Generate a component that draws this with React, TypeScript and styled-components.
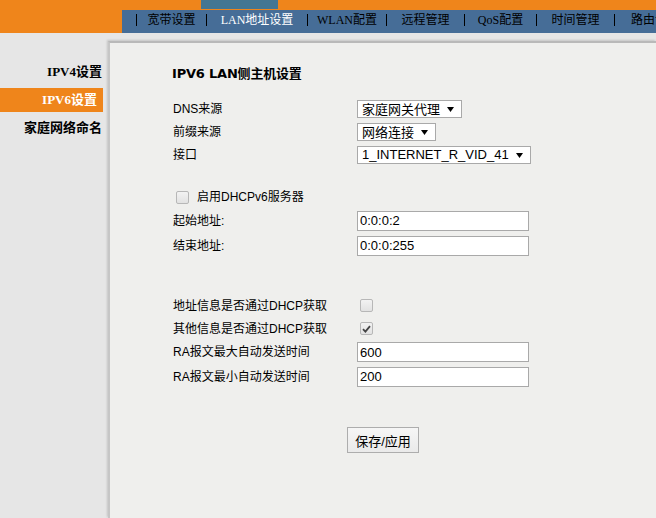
import React from "react";
import styled, { createGlobalStyle } from "styled-components";

const GlobalStyle = createGlobalStyle`
  html, body {
    margin: 0;
    padding: 0;
  }
  body {
    background: #e6e6e6;
    font-family: "Liberation Sans", "Noto Sans CJK SC", sans-serif;
  }
`;

const navItems = [
  { label: "宽带设置", width: 69 },
  { label: "LAN地址设置", width: 100, active: true },
  { label: "WLAN配置", width: 78 },
  { label: "远程管理", width: 77 },
  { label: "QoS配置", width: 71 },
  { label: "时间管理", width: 77 },
  { label: "路由设置", width: 80 },
];

const sideItems = [
  { label: "IPV4设置" },
  { label: "IPV6设置", active: true },
  { label: "家庭网络命名" },
];

const CheckMark = () => (
  <svg width="9" height="8" viewBox="0 0 9 8">
    <path d="M1 4.2 L3.4 6.6 L8 1.2" fill="none" stroke="#444" strokeWidth="1.8" />
  </svg>
);

const Caret = () => (
  <svg width="7" height="5" viewBox="0 0 7 5">
    <path d="M0 0 H7 L3.5 5 Z" fill="#000" />
  </svg>
);

const App = () => {
  return (
    <>
      <GlobalStyle />
      <Page>
        <Header>
          <NavBar>
            {navItems.map((item) => (
              <React.Fragment key={item.label}>
                <Sep />
                <NavItem $width={item.width} $active={item.active}>
                  {item.label}
                </NavItem>
              </React.Fragment>
            ))}
          </NavBar>
        </Header>
        <Body>
          <Sidebar>
            {sideItems.map((item) => (
              <SideItem key={item.label} $active={item.active}>
                {item.label}
              </SideItem>
            ))}
          </Sidebar>
          <Panel>
            <Form>
              <Title>IPV6 LAN侧主机设置</Title>

              <Section $top={15}>
                <Row $h={23}>
                  <Label>DNS来源</Label>
                  <SelectBox>
                    家庭网关代理
                    <Caret />
                  </SelectBox>
                </Row>
                <Row $h={23}>
                  <Label>前缀来源</Label>
                  <SelectBox>
                    网络连接
                    <Caret />
                  </SelectBox>
                </Row>
                <Row $h={23}>
                  <Label>接口</Label>
                  <SelectBox>
                    1_INTERNET_R_VID_41
                    <Caret />
                  </SelectBox>
                </Row>
              </Section>

              <Section $top={20}>
                <Row $h={22}>
                  <CheckLabel>
                    <Check />
                    启用DHCPv6服务器
                  </CheckLabel>
                </Row>
                <Row $h={25}>
                  <Label>起始地址:</Label>
                  <TextInput defaultValue="0:0:0:2" />
                </Row>
                <Row $h={25}>
                  <Label>结束地址:</Label>
                  <TextInput defaultValue="0:0:0:255" />
                </Row>
              </Section>

              <Section $top={36}>
                <Row $h={23}>
                  <Label>地址信息是否通过DHCP获取</Label>
                  <CheckCell>
                    <Check />
                  </CheckCell>
                </Row>
                <Row $h={23}>
                  <Label>其他信息是否通过DHCP获取</Label>
                  <CheckCell>
                    <Check>
                      <CheckMark />
                    </Check>
                  </CheckCell>
                </Row>
                <Row $h={24}>
                  <Label>RA报文最大自动发送时间</Label>
                  <TextInput defaultValue="600" />
                </Row>
                <Row $h={25}>
                  <Label>RA报文最小自动发送时间</Label>
                  <TextInput defaultValue="200" />
                </Row>
              </Section>
            </Form>

            <ButtonBar>
              <Button>保存/应用</Button>
            </ButtonBar>
          </Panel>
        </Body>
      </Page>
    </>
  );
};

export default App;

const Page = styled.div`
  width: 656px;
  height: 518px;
  overflow: hidden;
  display: flex;
  flex-direction: column;
  background: #e6e6e6;
`;

const Header = styled.div`
  height: 33px;
  flex: 0 0 33px;
  background: #ef851b;
  display: flex;
  justify-content: flex-end;
  align-items: flex-end;
`;

const NavBar = styled.nav`
  width: 534px;
  height: 23px;
  background: #466d97;
  display: flex;
  align-items: center;
  padding-left: 14px;
  box-sizing: border-box;
  white-space: nowrap;
`;

const Sep = styled.span`
  flex: 0 0 1px;
  width: 1px;
  height: 12px;
  margin-bottom: 3px;
  background: #000;
`;

const NavItem = styled.span<{ $width: number; $active?: boolean }>`
  position: relative;
  flex: 0 0 ${(p) => p.$width}px;
  width: ${(p) => p.$width}px;
  padding-bottom: 3px;
  box-sizing: border-box;
  text-align: center;
  font-family: "Liberation Serif", "Noto Sans CJK SC", serif;
  font-size: 12px;
  line-height: 14px;
  color: ${(p) => (p.$active ? "#fff" : "#000")};

  &::before {
    content: "";
    display: ${(p) => (p.$active ? "block" : "none")};
    position: absolute;
    left: -6px;
    top: -14px;
    width: 77px;
    height: 10px;
    background: #447692;
  }
`;

const Body = styled.div`
  flex: 1;
  display: flex;
  background: #e6e6e6;
`;

const Sidebar = styled.aside`
  flex: 0 0 103px;
  width: 103px;
  padding-top: 27px;
  display: flex;
  flex-direction: column;
  gap: 4px;
`;

const SideItem = styled.div<{ $active?: boolean }>`
  height: 24px;
  line-height: 24px;
  text-align: right;
  padding-right: ${(p) => (p.$active ? 6 : 1)}px;
  font-family: "Liberation Serif", "Noto Sans CJK SC", serif;
  font-weight: bold;
  font-size: 13px;
  color: ${(p) => (p.$active ? "#fff" : "#000")};
  background: ${(p) => (p.$active ? "#ef851b" : "transparent")};
`;

const Panel = styled.main`
  flex: 1;
  margin-top: 8px;
  margin-left: 5px;
  background: #efefed;
  border-top: 2px solid #b9b9b9;
  border-left: 2px solid #c6c6c6;
  box-shadow: -1px -1px 2px rgba(0, 0, 0, 0.15);
  display: flex;
  flex-direction: column;
`;

const Form = styled.div`
  padding: 22px 0 0 62px;
`;

const Title = styled.h2`
  margin: 0;
  font-family: "DejaVu Sans", "Noto Sans CJK SC", sans-serif;
  font-size: 13px;
  line-height: 17px;
  font-weight: bold;
  color: #000;
  letter-spacing: -0.2px;
`;

const Section = styled.div<{ $top: number }>`
  margin-top: ${(p) => p.$top}px;
  padding-left: 1px;
`;

const Row = styled.div<{ $h: number }>`
  height: ${(p) => p.$h}px;
  display: grid;
  grid-template-columns: 184px auto;
  align-items: center;
  justify-items: start;
`;

const Label = styled.span`
  font-size: 12px;
  line-height: 16px;
  color: #000;
`;

const SelectBox = styled.div`
  height: 18px;
  box-sizing: border-box;
  border: 1px solid #a9a9a9;
  background: #fff;
  display: inline-flex;
  align-items: center;
  gap: 7px;
  padding: 0 7px 0 4px;
  font-size: 13px;
  color: #000;
  white-space: nowrap;
  cursor: default;

  svg {
    margin-top: 1px;
  }
`;

const TextInput = styled.input`
  width: 172px;
  height: 20px;
  box-sizing: border-box;
  border: 1px solid #a9a9a9;
  background: #fff;
  padding: 0 2px;
  font-family: "Liberation Sans", sans-serif;
  font-size: 13px;
  color: #000;
  outline: none;
`;

const Check = styled.span`
  width: 13px;
  height: 13px;
  box-sizing: border-box;
  border: 1px solid #b7b7b7;
  border-radius: 2px;
  background: linear-gradient(#f2f2f2, #e2e2e2);
  display: inline-flex;
  align-items: center;
  justify-content: center;
`;

const CheckLabel = styled.label`
  grid-column: 1 / span 2;
  display: inline-flex;
  align-items: center;
  gap: 8px;
  padding-left: 3px;
  font-size: 12px;
  line-height: 16px;
  color: #000;
`;

const CheckCell = styled.span`
  display: inline-flex;
  padding-left: 3px;
`;

const ButtonBar = styled.div`
  margin-top: 38px;
  display: flex;
  justify-content: center;
`;

const Button = styled.button`
  width: 72px;
  height: 26px;
  border: 1px solid #adadad;
  background: linear-gradient(#f6f6f6, #eaeaea);
  font-family: "Liberation Sans", "Noto Sans CJK SC", sans-serif;
  font-size: 13px;
  color: #000;
  padding: 0;
  cursor: pointer;
`;
